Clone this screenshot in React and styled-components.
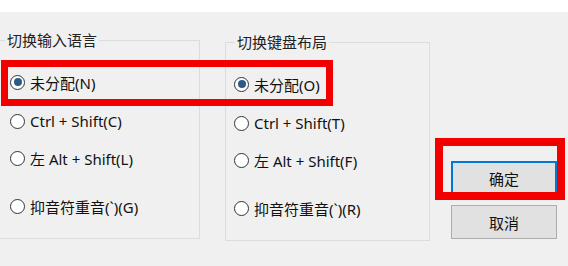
import React from "react";
import styled, { createGlobalStyle } from "styled-components";

const Global = createGlobalStyle`
  html, body { margin: 0; padding: 0; background: #f0f0f0; }
  body { font-family: "Noto Sans", "Noto Sans CJK SC", sans-serif; }
`;

const Window = styled.div`
  position: relative;
  width: 568px;
  height: 266px;
  overflow: hidden;
  background: #f0f0f0;
  display: flex;
  flex-direction: column;
`;

const TopStrip = styled.div`
  height: 12px;
  background: #ffffff;
  flex: none;
`;

const Body = styled.div`
  display: flex;
  align-items: flex-start;
`;

const Group = styled.fieldset`
  box-sizing: border-box;
  margin: ${(p) => p.$top}px 0 0 ${(p) => p.$left}px;
  padding: 0;
  width: 205px;
  height: 207px;
  border: 1px solid #dcdcdc;
  flex: none;
`;

const Legend = styled.legend`
  margin-left: 9px;
  padding: 0 2px;
  font-size: 15px;
  line-height: 16px;
  color: #222;
`;

const List = styled.div`
  display: flex;
  flex-direction: column;
  padding-left: ${(p) => p.$inset}px;
`;

const Row = styled.label`
  display: flex;
  align-items: center;
  height: 20px;
  margin-top: ${(p) => p.$gap}px;
  gap: 5px;
  font-size: 15px;
  color: #111;
  white-space: nowrap;
`;

const Radio = styled.span`
  box-sizing: border-box;
  width: 15px;
  height: 15px;
  border-radius: 50%;
  border: 1px solid #333;
  background: #fff;
  display: flex;
  align-items: center;
  justify-content: center;
  flex: none;
  &::after {
    content: "";
    width: 8px;
    height: 8px;
    border-radius: 50%;
    background: ${(p) => (p.$checked ? "#2c5a86" : "transparent")};
  }
`;

const Buttons = styled.div`
  display: flex;
  flex-direction: column;
  gap: 10px;
  margin: 149px 0 0 21px;
`;

const Button = styled.button`
  box-sizing: border-box;
  width: 106px;
  height: 34px;
  background: #e1e1e1;
  border: ${(p) => (p.$default ? "2px solid #0078d7" : "1px solid #adadad")};
  font-family: "Noto Sans CJK SC", sans-serif;
  font-size: 15px;
  color: #111;
  padding: 0;
`;

const Highlight = styled.div`
  position: absolute;
  box-sizing: border-box;
  border: ${(p) => p.$w}px solid #f20000;
  pointer-events: none;
`;

const gaps = [24, 19, 17, 28];

const left = ["未分配(N)", "Ctrl + Shift(C)", "左 Alt + Shift(L)", "抑音符重音(`)(G)"];
const right = ["未分配(O)", "Ctrl + Shift(T)", "左 Alt + Shift(F)", "抑音符重音(`)(R)"];

function RadioGroup({ title, items, top, leftMargin, inset }) {
  return (
    <Group $top={top} $left={leftMargin}>
      <Legend>{title}</Legend>
      <List $inset={inset}>
        {items.map((t, i) => (
          <Row key={t} $gap={gaps[i]}>
            <Radio $checked={i === 0} />
            {t}
          </Row>
        ))}
      </List>
    </Group>
  );
}

export default function App() {
  return (
    <>
      <Global />
      <Window>
        <TopStrip />
        <Body>
          <RadioGroup title="切换输入语言" items={left} top={20} leftMargin={-5} inset={14} />
          <RadioGroup title="切换键盘布局" items={right} top={22} leftMargin={25} inset={8} />
          <Buttons>
            <Button $default>确定</Button>
            <Button>取消</Button>
          </Buttons>
        </Body>
        <Highlight $w={7} style={{ left: 1, top: 60, width: 332, height: 46 }} />
        <Highlight $w={8} style={{ left: 435, top: 138, width: 130, height: 62 }} />
      </Window>
    </>
  );
}
